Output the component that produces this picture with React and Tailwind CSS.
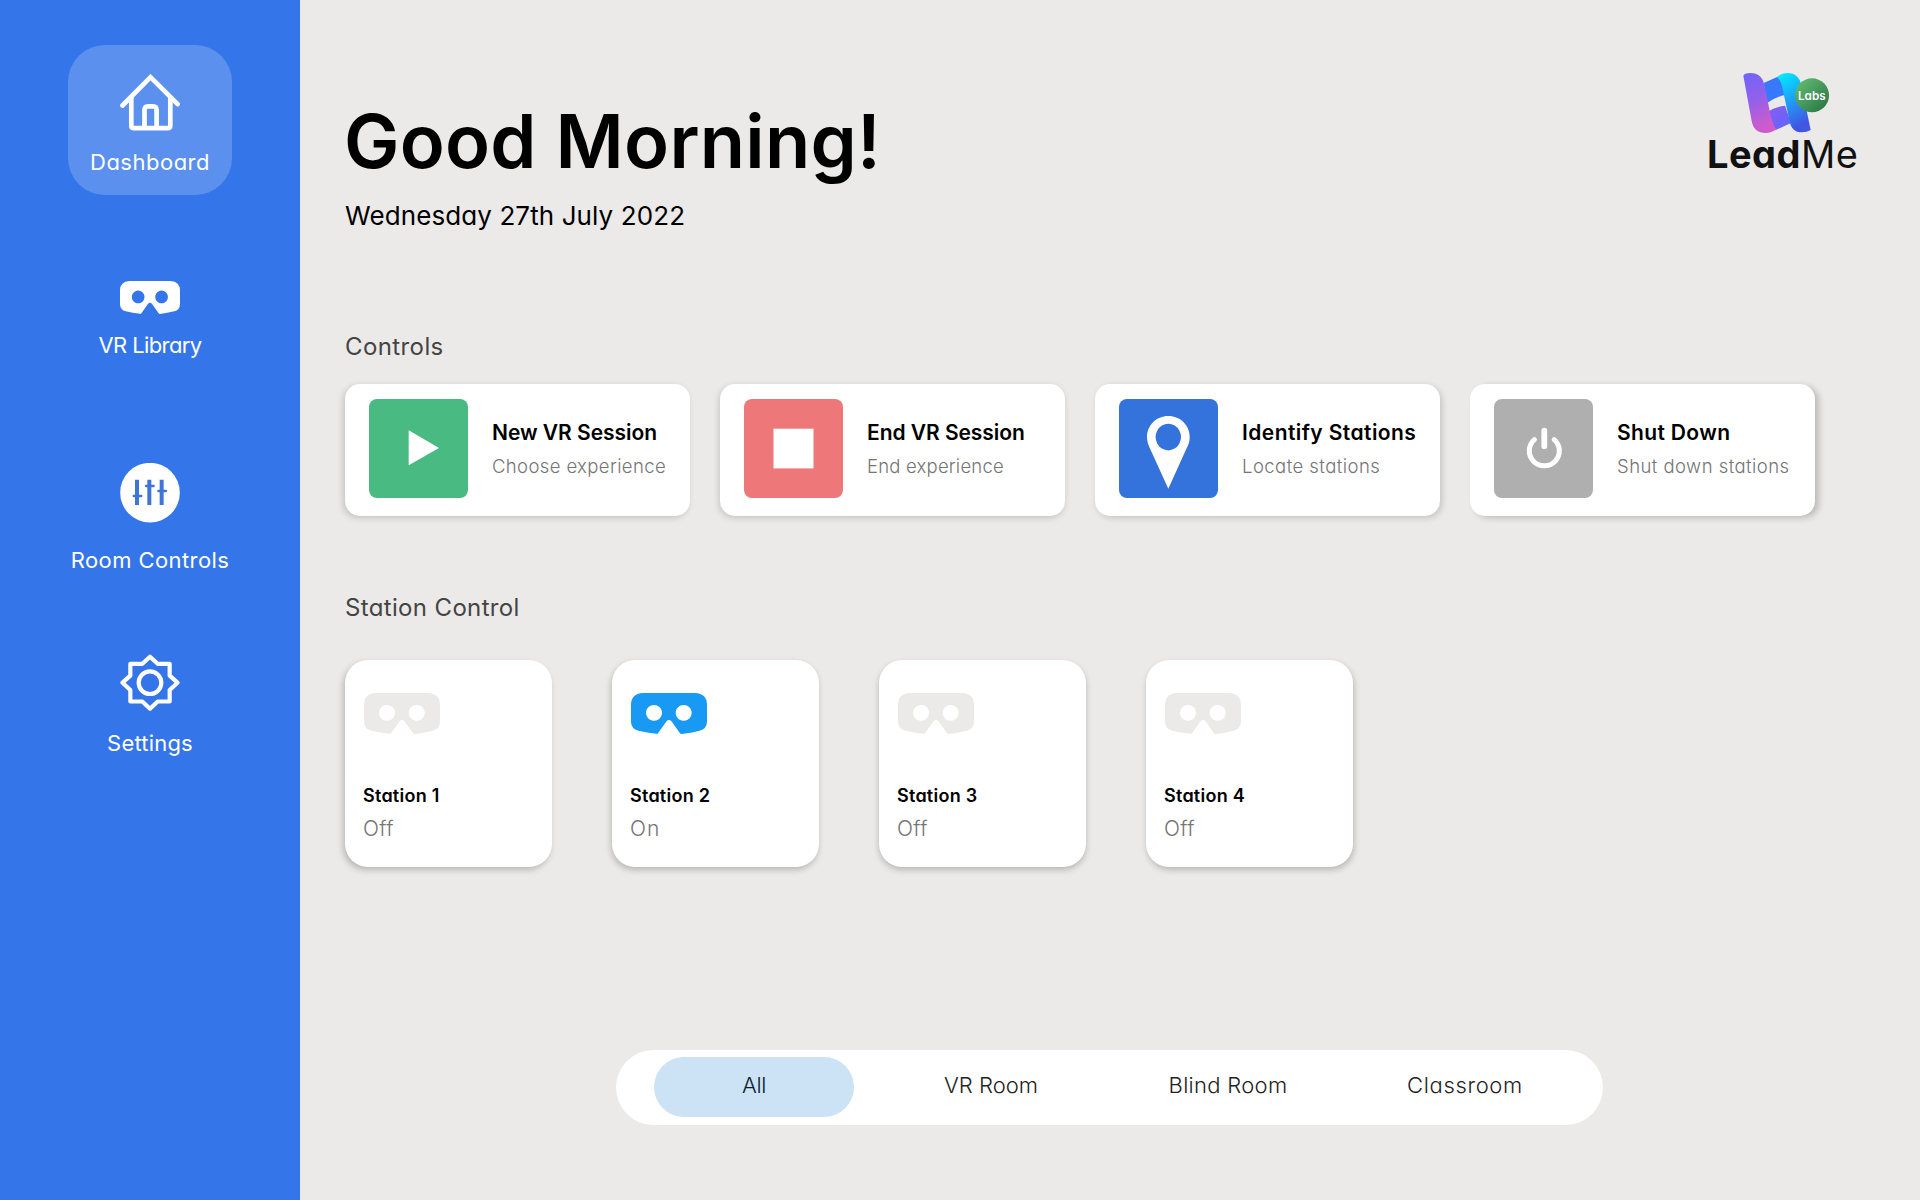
function HouseIcon() {
  return (
    <svg className="block h-[57px] w-[60px]" viewBox="0 0 60 57" fill="none" stroke="#fff" strokeWidth="4.7" strokeLinecap="round" strokeLinejoin="round">
      <path d="M2.5 31.5 L30.5 3.2 L57.6 30.2" strokeLinejoin="miter" />
      <path d="M11.3 24 V51.5 Q11.3 54.2 14 54.2 H47.5 Q50.3 54.2 50.3 51.5 V24" />
      <path d="M24.5 53 V36 Q24.5 32.3 28 32.3 H33 Q36.6 32.3 36.6 36 V53" />
    </svg>
  );
}

function HeadsetIcon({ className }) {
  return (
    <svg className={className} viewBox="0 0 228 124" preserveAspectRatio="none" fill="currentColor">
      <path
        fillRule="evenodd"
        d="M36 0 H192 Q228 2 228 36 V88 Q227 109 206 114 Q180 121 152 124 Q148 124 146 120 L122 86 Q114 77 106 86 L82 120 Q80 124 76 123.500 Q48 120 22 114 Q1 109 0 88 V36 Q0 2 36 0 Z M69 36 a24 24 0 1 0 .01 0 Z M158 36 a24 24 0 1 0 .01 0 Z"
      />
    </svg>
  );
}

function SlidersIcon() {
  return (
    <svg className="block size-[60px]" viewBox="0 0 180 180">
      <circle cx="90" cy="89" r="89.500" fill="#fff" />
      <g stroke="#3f74d8" fill="none">
        <path d="M51 50 V126 M88 50 V126 M125 50 V126" strokeWidth="12" />
        <path d="M41 99 H64 M78 69 H101 M115 84 H138" strokeWidth="7" strokeLinecap="round" />
      </g>
    </svg>
  );
}

function GearIcon() {
  return (
    <svg className="block h-[57px] w-[60px]" viewBox="0 0 180 171" fill="none" stroke="#fff" strokeWidth="12.500" strokeLinejoin="round">
      <path d="M90 8 L67 29.500 H31 V65 L7.500 86 L31 108 V142.500 H67 L90 164 L113 142.500 H149 V108 L172.500 86 L149 65 V29.500 H113 Z" />
      <circle cx="90" cy="86" r="34" />
    </svg>
  );
}

function LeadMeLogo() {
  return (
    <div className="w-[150px]">
      <svg className="ml-9 block h-[62px] w-[88px]" viewBox="190 65 264 186">
        <defs>
          <linearGradient id="bandLeft" x1="0" y1="0" x2="0.3" y2="1">
            <stop offset="0" stopColor="#6f64fb" />
            <stop offset="0.5" stopColor="#9360ea" />
            <stop offset="1" stopColor="#cf5bcb" />
          </linearGradient>
          <linearGradient id="bandTop" x1="0" y1="0" x2="1" y2="1">
            <stop offset="0" stopColor="#3f74ff" />
            <stop offset="1" stopColor="#2f7dff" />
          </linearGradient>
          <linearGradient id="bandLow" x1="0" y1="0" x2="1" y2="1">
            <stop offset="0" stopColor="#8a5cf0" />
            <stop offset="1" stopColor="#5b66ff" />
          </linearGradient>
          <linearGradient id="bandRight" x1="0" y1="0" x2="0.35" y2="1">
            <stop offset="0" stopColor="#00f2ff" />
            <stop offset="0.55" stopColor="#1f9df8" />
            <stop offset="1" stopColor="#4157e2" />
          </linearGradient>
          <linearGradient id="badge" x1="0" y1="0" x2="1" y2="1">
            <stop offset="0" stopColor="#66c274" />
            <stop offset="1" stopColor="#256f42" />
          </linearGradient>
        </defs>
        <path d="M252 98 L294 79 Q312 90 314 134 Q285 142 262 158 Z" fill="url(#bandTop)" />
        <path d="M266 184 Q288 168 316 166 L334 218 L286 240 Z" fill="url(#bandLow)" />
        <path d="M191 76 Q194 68 212 68 C236 68 249 82 253 100 L272 190 Q278 222 290 237 Q276 248 258 248 C234 248 220 236 216 212 Z" fill="url(#bandLeft)" />
        <path d="M292 80 Q306 68 325 68 C346 68 361 82 365 104 L393 239 Q383 246 366 246 C346 246 334 234 330 214 L309 116 Q304 90 292 80 Z" fill="url(#bandRight)" />
        <circle cx="397" cy="135" r="51" fill="url(#badge)" />
        <text x="396.500" y="149" textAnchor="middle" fill="#fff" fontFamily="Inter, sans-serif" fontWeight="600" fontSize="35" textLength="83">Labs</text>
      </svg>
      <div className="mt-px flex text-[38px] leading-none text-[#111]">
        <span className="font-bold tracking-[0.5px]">Lead</span>
        <span className="tracking-[0.4px]">Me</span>
      </div>
    </div>
  );
}

const controls = [
  {
    title: 'New VR Session', sub: 'Choose experience', tile: 'bg-[#4aba83]', titleTrack: 'tracking-[-0.03px]', subTrack: 'tracking-[0.38px]',
    shadow: 'shadow-[-2px_2px_6px_rgba(0,0,0,0.17)]',
    icon: <path d="M39.700 31.300 L70 49 L39.700 66.300 Z" fill="#fff" />,
  },
  {
    title: 'End VR Session', sub: 'End experience', tile: 'bg-[#ee7879]', titleTrack: 'tracking-[-0.05px]', subTrack: 'tracking-[0.2px]',
    shadow: 'shadow-[-1px_2px_6px_rgba(0,0,0,0.17)]',
    icon: <rect x="29.500" y="29.700" width="40" height="39.700" fill="#fff" />,
  },
  {
    title: 'Identify Stations', sub: 'Locate stations', tile: 'bg-[#3472dc]', titleTrack: 'tracking-[0.43px]', subTrack: 'tracking-[0.45px]',
    shadow: 'shadow-[2px_2px_6px_rgba(0,0,0,0.17)]',
    icon: <path fillRule="evenodd" fill="#fff" d="M49.300 17 C61.500 17 70.700 26.500 70.700 38 C70.700 42.500 69.500 45.500 67.500 49.500 L49.300 89.700 L31 49.500 C29.200 45.500 28 42.500 28 38 C28 26.500 37.200 17 49.300 17 Z M49.300 24.800 a12.700 13.300 0 1 0 .01 0 Z" />,
  },
  {
    title: 'Shut Down', sub: 'Shut down stations', tile: 'bg-[#afafaf]', titleTrack: 'tracking-[0.35px]', subTrack: 'tracking-[0.45px]',
    shadow: 'shadow-[4px_2px_6px_rgba(0,0,0,0.2)]',
    icon: (
      <g fill="none" stroke="#fff" strokeLinecap="round">
        <path d="M50.300 31.700 V47.300" strokeWidth="5.800" />
        <path d="M40.400 40.600 A15 15 0 1 0 60.200 40.600" strokeWidth="5" />
      </g>
    ),
  },
];

function ControlCard({ title, sub, tile, titleTrack, subTrack, shadow, icon }) {
  return (
    <div className={`flex h-[132px] w-[345px] rounded-[15px] bg-white pl-6 pt-[15px] ${shadow}`}>
      <div className={`size-[99px] shrink-0 rounded-lg ${tile}`}>
        <svg className="block size-[99px]" viewBox="0 0 99 99">{icon}</svg>
      </div>
      <div className="ml-6 mt-[23px] whitespace-nowrap">
        <div className={`text-[21px] font-semibold leading-none text-black ${titleTrack}`}>{title}</div>
        <div className={`mt-[14px] text-[18.5px] font-light leading-none text-[#757575] ${subTrack}`}>{sub}</div>
      </div>
    </div>
  );
}

const stations = [
  { name: 'Station 1', on: false, shadow: 'shadow-[-2px_3px_6px_rgba(0,0,0,0.22)]' },
  { name: 'Station 2', on: true, shadow: 'shadow-[-1px_3px_6px_rgba(0,0,0,0.22)]' },
  { name: 'Station 3', on: false, shadow: 'shadow-[0px_3px_6px_rgba(0,0,0,0.22)]' },
  { name: 'Station 4', on: false, shadow: 'shadow-[1px_3px_6px_rgba(0,0,0,0.22)]' },
];

function StationCard({ name, on, shadow }) {
  return (
    <div className={`h-[207px] w-[207px] rounded-[23px] bg-white pl-[18px] pt-[33px] ${shadow}`}>
      <HeadsetIcon className={`ml-px block h-[41px] w-[76px] ${on ? 'text-[#1799f4]' : 'text-[#ebeae9]'}`} />
      <div className="mt-[53px] text-[18px] font-semibold leading-none tracking-[0.25px] text-black">{name}</div>
      <div className={`mt-[13px] text-[21px] font-light leading-none text-[#757575] ${on ? 'tracking-[1px]' : 'tracking-[0.3px]'}`}>{on ? 'On' : 'Off'}</div>
    </div>
  );
}

const rooms = [
  { name: 'All', cls: 'bg-[#cce3f5] text-[#0c1c30] tracking-[-0.4px]' },
  { name: 'VR Room', cls: 'text-[#222]' },
  { name: 'Blind Room', cls: 'text-[#222] tracking-[0.3px]' },
  { name: 'Classroom', cls: 'text-[#222] tracking-[0.65px]' },
];

export default function App() {
  return (
    <div className="flex h-[1200px] w-[1920px] overflow-hidden bg-[#ebeae9] font-['Inter',sans-serif] [font-feature-settings:'cv11']">
      <nav className="flex w-[300px] shrink-0 flex-col items-center bg-[#3575ea] pt-[45px] text-[22px] leading-none text-white">
        <div className="flex h-[150px] w-[164px] flex-col items-center rounded-[37px] bg-[#5b90ef] pt-[29px]">
          <HouseIcon />
          <span className="mt-5 tracking-[0.5px]">Dashboard</span>
        </div>
        <div className="mt-[86px] flex flex-col items-center">
          <HeadsetIcon className="block h-[33px] w-[60px]" />
          <span className="mt-5 tracking-[-0.6px]">VR Library</span>
        </div>
        <div className="mt-[107px] flex flex-col items-center">
          <SlidersIcon />
          <span className="mt-[26px] tracking-[0.42px]">Room Controls</span>
        </div>
        <div className="mt-[83px] flex flex-col items-center">
          <GearIcon />
          <span className="mt-[21px] tracking-[0.2px]">Settings</span>
        </div>
      </nav>

      <main className="flex flex-1 flex-col pl-[45px]">
        <header className="flex h-[335px] justify-between pr-[60px]">
          <div className="pt-[104px] text-black">
            <h1 className="-ml-px text-[74px] font-semibold leading-none tracking-[0.25px]">Good Morning!</h1>
            <p className="mt-[25px] text-[26px] leading-none tracking-[0.1px]">Wednesday 27th July 2022</p>
          </div>
          <div className="mr-[3px] pt-[72px]">
            <LeadMeLogo />
          </div>
        </header>

        <h2 className="text-[24px] leading-none tracking-[0.4px] text-[#444]">Controls</h2>
        <div className="mt-[25px] flex gap-[30px]">
          {controls.map((c) => <ControlCard key={c.title} {...c} />)}
        </div>

        <h2 className="mt-20 text-[24px] leading-none tracking-[0.35px] text-[#444]">Station Control</h2>
        <div className="mt-10 flex gap-[60px]">
          {stations.map((s) => <StationCard key={s.name} {...s} />)}
        </div>

        <div className="ml-[271px] mt-[183px] flex h-[75px] w-[987px] gap-[37px] rounded-[37.5px] bg-white pl-[38px] pt-[7px]">
          {rooms.map((r) => (
            <div key={r.name} className={`h-[60px] w-[200px] rounded-[30px] text-center text-[22px] font-light leading-[57px] ${r.cls}`}>{r.name}</div>
          ))}
        </div>
      </main>
    </div>
  );
}
